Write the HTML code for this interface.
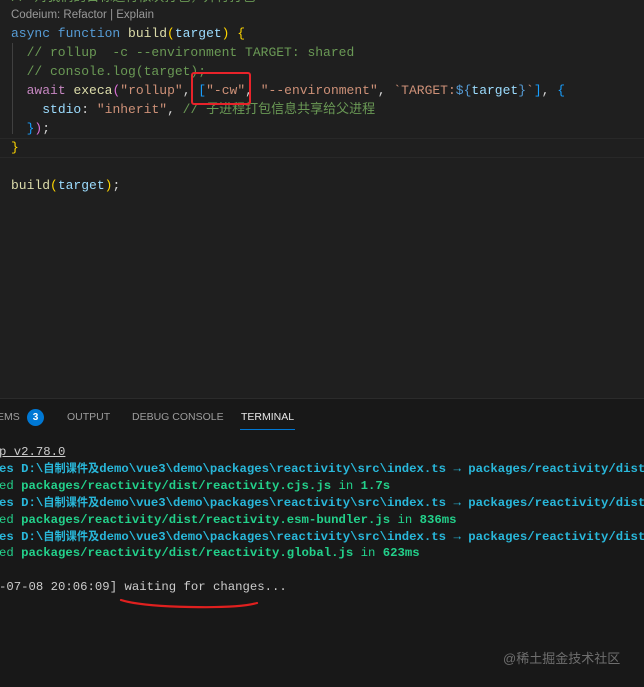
<!DOCTYPE html>
<html><head><meta charset="utf-8"><style>
html,body{margin:0;padding:0;width:644px;height:686px;overflow:hidden;background:#1f1f1f}
.ed{position:absolute;left:0;top:0;width:644px;height:398px;background:#1f1f1f}
.mono{font-family:"Liberation Mono","Noto Sans CJK SC",monospace;white-space:pre}
.l{position:absolute;left:11px;font-size:13px;height:19px;line-height:19px;color:#d4d4d4}
.lens{position:absolute;left:11px;top:9px;font:11.5px "Liberation Sans",sans-serif;color:#999}
.c{color:#6a9955}.k{color:#569cd6}.f{color:#dcdcaa}.v{color:#9cdcfe}.s{color:#ce9178}.p{color:#c586c0}.y{color:#ffd700}.b{color:#179fff}.m{color:#da70d6}
.panel{position:absolute;left:0;top:398px;width:644px;height:288px;background:#181818;border-top:1px solid #2b2b2b}
.tab{position:absolute;top:12px;font:10.5px "Liberation Sans",sans-serif;color:#9d9d9d}
.t{position:absolute;left:-1px;font-size:12.3px;height:17px;line-height:17px;color:#cccccc;width:660px;overflow:hidden}
.cy{color:#29b8db;font-weight:bold}.gr{color:#23d18b;font-weight:bold}.g2{color:#23d18b}
.cj{font-size:11.2px}
</style></head><body>
<div class="ed">
<div class="mono l c" style="top:-12px">// 对我们的目标进行依次打包，并行打包</div>
<div class="lens">Codeium: Refactor | Explain</div>
<div style="position:absolute;left:12px;top:43px;width:1px;height:91px;background:#404040"></div>
<div class="mono l" style="top:24px"><span class="k">async function</span> <span class="f">build</span><span class="y">(</span><span class="v">target</span><span class="y">)</span> <span class="y">{</span></div>
<div class="mono l c" style="top:43px">  // rollup  -c --environment TARGET: shared</div>
<div class="mono l c" style="top:62px">  // console.log(target);</div>
<div class="mono l" style="top:81px">  <span class="p">await</span> <span class="f">execa</span><span class="m">(</span><span class="s">"rollup"</span>, <span class="b">[</span><span class="s">"-cw"</span>, <span class="s">"--environment"</span>, <span class="s">`TARGET:</span><span class="k">${</span><span class="v">target</span><span class="k">}</span><span class="s">`</span><span class="b">]</span>, <span class="b">{</span></div>
<div class="mono l" style="top:100px">    <span class="v">stdio</span>: <span class="s">"inherit"</span>, <span class="c">// 子进程打包信息共享给父进程</span></div>
<div class="mono l" style="top:119px">  <span class="b">}</span><span class="m">)</span>;</div>
<div style="position:absolute;left:0;top:138px;width:644px;height:18px;border-top:1px solid #282828;border-bottom:1px solid #282828"></div>
<div class="mono l" style="top:138px"><span class="y">}</span></div>
<div class="mono l" style="top:176px"><span class="f">build</span><span class="y">(</span><span class="v">target</span><span class="y">)</span>;</div>
<div style="position:absolute;left:191px;top:72px;width:56px;height:29px;border:2.5px solid #e8232a;border-radius:3px"></div>
</div>
<div class="panel">
<div class="tab" style="left:-3px">EMS</div>
<div style="position:absolute;left:27px;top:10px;width:17px;height:17px;border-radius:50%;background:#0078d4;color:#fff;font:bold 10px 'Liberation Sans',sans-serif;text-align:center;line-height:17px">3</div>
<div class="tab" style="left:67px">OUTPUT</div>
<div class="tab" style="left:132px">DEBUG CONSOLE</div>
<div class="tab" style="left:241px;color:#e7e7e7">TERMINAL</div>
<div style="position:absolute;left:240px;top:30px;width:55px;height:1px;background:#0078d4"></div>
<div class="mono t" style="top:45px"><span style="text-decoration:underline">p v2.78.0</span></div>
<div class="mono t cy" style="top:62px">es D:\<span class="cj">自制课件及</span>demo\vue3\demo\packages\reactivity\src\index.ts → packages/reactivity/dist/reactivity</div>
<div class="mono t" style="top:79px"><span class="g2">ed </span><span class="gr">packages/reactivity/dist/reactivity.cjs.js</span><span class="g2"> in </span><span class="gr">1.7s</span></div>
<div class="mono t cy" style="top:96px">es D:\<span class="cj">自制课件及</span>demo\vue3\demo\packages\reactivity\src\index.ts → packages/reactivity/dist/reactivity</div>
<div class="mono t" style="top:113px"><span class="g2">ed </span><span class="gr">packages/reactivity/dist/reactivity.esm-bundler.js</span><span class="g2"> in </span><span class="gr">836ms</span></div>
<div class="mono t cy" style="top:130px">es D:\<span class="cj">自制课件及</span>demo\vue3\demo\packages\reactivity\src\index.ts → packages/reactivity/dist/reactivity</div>
<div class="mono t" style="top:146px"><span class="g2">ed </span><span class="gr">packages/reactivity/dist/reactivity.global.js</span><span class="g2"> in </span><span class="gr">623ms</span></div>
<div class="mono t" style="top:180px">-07-08 20:06:09] waiting for changes...</div>
<svg style="position:absolute;left:0;top:0" width="644" height="288"><path d="M121 201 Q140 207 190 208 Q240 209 257 204" stroke="#e0201f" stroke-width="2.2" fill="none" stroke-linecap="round"/></svg>
<div style="position:absolute;left:503px;top:249px;font:13px 'Liberation Sans','Noto Sans CJK SC',sans-serif;color:#6e6e6e">@稀土掘金技术社区</div>
</div>
</body></html>
